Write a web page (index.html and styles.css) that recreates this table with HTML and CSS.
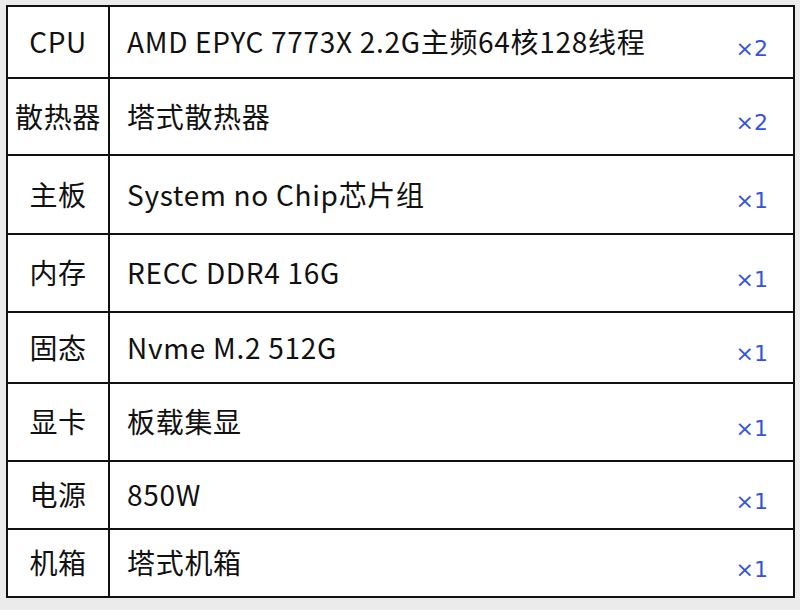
FILE: index.html
```html
<!DOCTYPE html>
<html lang="zh-CN">
<head>
<meta charset="utf-8">
<title>配置清单</title>
<link rel="stylesheet" href="styles.css">
</head>
<body>
<div class="spec">
  <div class="row"><div class="label">CPU</div><div class="value"><span class="name">AMD EPYC 7773X 2.2G主频64核128线程</span><span class="qty">×2</span></div></div>
  <div class="row"><div class="label">散热器</div><div class="value"><span class="name">塔式散热器</span><span class="qty">×2</span></div></div>
  <div class="row"><div class="label">主板</div><div class="value"><span class="name">System no Chip芯片组</span><span class="qty">×1</span></div></div>
  <div class="row"><div class="label">内存</div><div class="value"><span class="name">RECC DDR4 16G</span><span class="qty">×1</span></div></div>
  <div class="row"><div class="label">固态</div><div class="value"><span class="name">Nvme M.2 512G</span><span class="qty">×1</span></div></div>
  <div class="row"><div class="label">显卡</div><div class="value"><span class="name">板载集显</span><span class="qty">×1</span></div></div>
  <div class="row"><div class="label">电源</div><div class="value"><span class="name">850W</span><span class="qty">×1</span></div></div>
  <div class="row"><div class="label">机箱</div><div class="value"><span class="name">塔式机箱</span><span class="qty">×1</span></div></div>
</div>
</body>
</html>
```
FILE: styles.css
```css
html, body {
  margin: 0;
  padding: 0;
  background: #ebebeb;
}
body {
  padding: 5px 0 0 6px;
  font-family: "Noto Sans CJK SC", "Noto Sans", sans-serif;
  color: #111;
}
.spec {
  width: 789px;
  box-sizing: border-box;
  background: #fff;
  border-left: 2px solid #111;
  border-right: 2px solid #111;
  border-bottom: 2px solid #111;
}
.row {
  display: grid;
  grid-template-columns: 102px 1fr;
  border-top: 2px solid #111;
  box-sizing: border-box;
  height: 72px;
}
.row:nth-child(2) { height: 77px; }
.row:nth-child(3) { height: 79px; }
.row:nth-child(4) { height: 78px; }
.row:nth-child(5) { height: 71px; }
.row:nth-child(6) { height: 78px; }
.row:nth-child(7) { height: 68px; }
.row:nth-child(8) { height: 68px; }
.label {
  display: flex;
  align-items: center;
  justify-content: center;
  border-right: 2px solid #111;
  padding-bottom: 2px;
  font-size: 28px;
  letter-spacing: 0.6px;
}
.value {
  display: flex;
  align-items: center;
  padding: 0 25px 2px 17px;
  font-size: 28px;
  letter-spacing: 0.7px;
}
.name {
  flex: 1;
}
.qty {
  font-family: "DejaVu Sans", sans-serif;
  font-size: 22px;
  letter-spacing: 0;
  color: #3352e0;
  align-self: center;
  padding-top: 14px;
}
```
